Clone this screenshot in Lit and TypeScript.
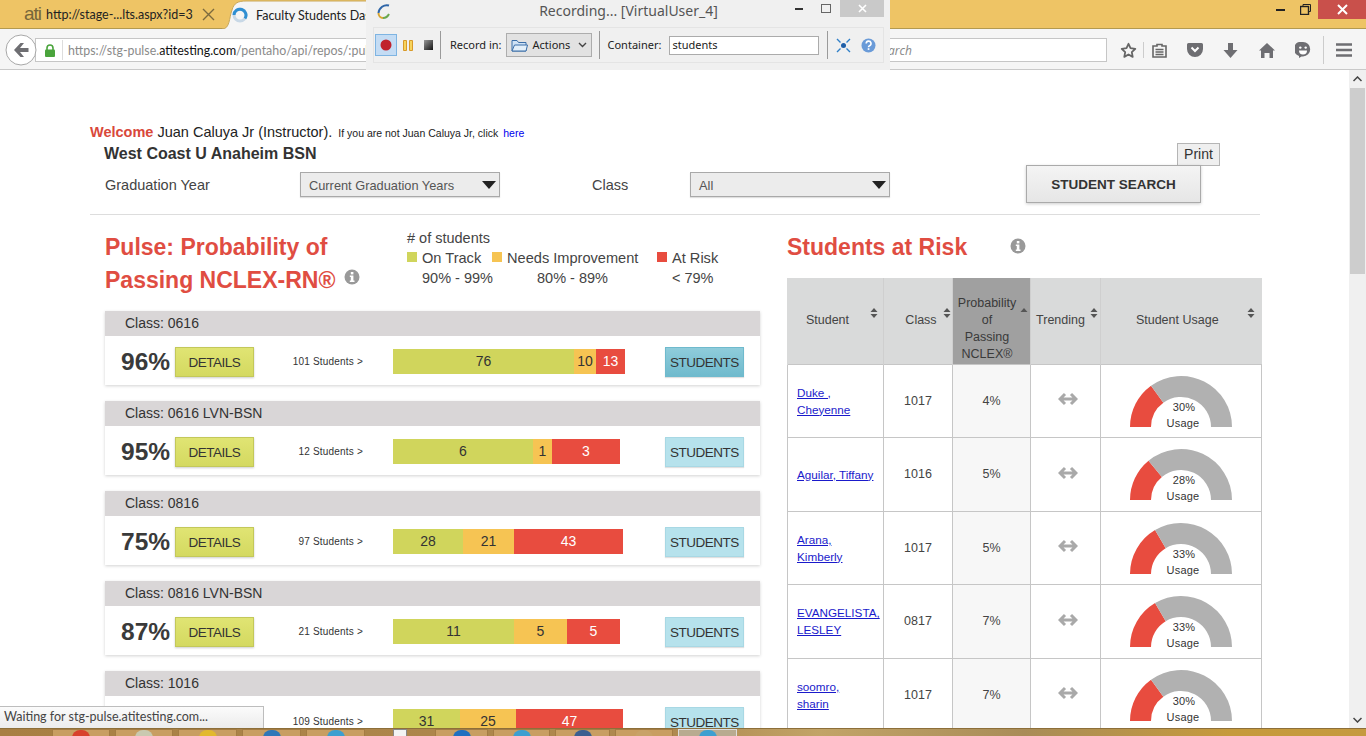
import { css, html, svg, LitElement } from 'lit';
import { customElement } from 'lit/decorators.js';

interface Segment {
  value: number;
  width: number;
  color: string;
}

interface ClassRow {
  name: string;
  pct: number;
  students: number;
  segments: [number, number, number];
  widths: [number, number, number];
}

interface RiskRow {
  student: string[];
  cls: string;
  prob: string;
  usage: number;
}

const CLASSES: ClassRow[] = [
  { name: '0616', pct: 96, students: 101, segments: [76, 10, 13], widths: [181, 22, 29] },
  { name: '0616 LVN-BSN', pct: 95, students: 12, segments: [6, 1, 3], widths: [140, 19, 68] },
  { name: '0816', pct: 75, students: 97, segments: [28, 21, 43], widths: [70, 51, 109] },
  { name: '0816 LVN-BSN', pct: 87, students: 21, segments: [11, 5, 5], widths: [121, 53, 53] },
  { name: '1016', pct: 84, students: 109, segments: [31, 25, 47], widths: [67, 56, 107] },
];

const RISK: RiskRow[] = [
  { student: ['Duke ,', 'Cheyenne'], cls: '1017', prob: '4%', usage: 30 },
  { student: ['Aguilar, Tiffany'], cls: '1016', prob: '5%', usage: 28 },
  { student: ['Arana,', 'Kimberly'], cls: '1017', prob: '5%', usage: 33 },
  { student: ['EVANGELISTA,', 'LESLEY'], cls: '0817', prob: '7%', usage: 33 },
  { student: ['soomro,', 'sharin'], cls: '1017', prob: '7%', usage: 30 },
];

const TASKS = [
  { w: 58, icon: '#d8402c' },
  { w: 58, icon: '#c9c9b0' },
  { w: 59, icon: '#e2b92e' },
  { w: 59, icon: '#2f77b8' },
  { w: 59, icon: '#3d9fd0' },
];
const TASKS_RIGHT = [
  { w: 53, icon: '#1f6fc0' },
  { w: 57, icon: '#3d9fd0' },
  { w: 55, icon: '#3b5f90' },
  { w: 58, icon: '#c8a268' },
  { w: 59, icon: '#3d9fd0', active: true },
];

const SEG_COLORS = ['#d0d55c', '#f6c453', '#e84c3f'];

function arc(startDeg: number, endDeg: number) {
  const cx = 51;
  const cy = 52;
  const R = 51;
  const r = 30;
  const pt = (rad: number, deg: number) => {
    const a = (deg * Math.PI) / 180;
    return `${(cx - rad * Math.cos(a)).toFixed(2)} ${(cy - rad * Math.sin(a)).toFixed(2)}`;
  };
  return `M${pt(R, startDeg)} A${R} ${R} 0 0 1 ${pt(R, endDeg)} L${pt(r, endDeg)} A${r} ${r} 0 0 0 ${pt(r, startDeg)} Z`;
}

const infoIcon = (cls: string) => html`<svg class=${cls} width="16" height="16" viewBox="0 0 16 16">
  <circle cx="8" cy="8" r="7.5" fill="#999"></circle>
  <rect x="6.8" y="3" width="2.6" height="2.4" fill="#fff"></rect>
  <path d="M5.8 6.6h3.6v5h1.1v1.4H5.8v-1.4h1v-3.6h-1z" fill="#fff"></path>
</svg>`;

const sortIcon = (up = true, down = true) => html`<svg class="sort" width="8" height="12" viewBox="0 0 8 12">
  ${up ? svg`<path d="M4 1 L7.5 5 H.5Z" fill="#555"></path>` : ''}
  ${down ? svg`<path d="M4 11 L7.5 7 H.5Z" fill="#555"></path>` : ''}
</svg>`;

@customElement('app-root')
export class AppRoot extends LitElement {
  static override styles = css`
    :host {
      display: flex;
      flex-direction: column;
      position: relative;
      width: 1366px;
      height: 736px;
      overflow: hidden;
      background: #fff;
      font-family: 'Liberation Sans', Arial, sans-serif;
      color: #333;
    }
    .tabs {
      flex: none;
      height: 29px;
      background: #eec465;
      border-bottom: 1px solid #b39a50;
      box-sizing: border-box;
      display: flex;
      position: relative;
      font: 12.5px Lato, sans-serif;
      color: #222;
      white-space: nowrap;
    }
    .tab-one {
      display: flex;
      align-items: center;
      padding-left: 24px;
      width: 226px;
      height: 29px;
      box-sizing: border-box;
      flex: none;
    }
    .ati {
      font: 19px 'Liberation Sans', sans-serif;
      color: #77663a;
      letter-spacing: -1px;
      width: 22px;
      line-height: 20px;
      margin-top: -1px;
      flex: none;
    }
    .tab-url {
      width: 144px;
      flex: none;
    }
    .tab-x {
      margin-left: 12px;
      flex: none;
    }
    .tab-two {
      position: relative;
      width: 200px;
      height: 30px;
      display: flex;
      align-items: center;
      padding-left: 6px;
      box-sizing: border-box;
      flex: none;
    }
    .tab-two .shape {
      position: absolute;
      left: -4px;
      top: 0;
    }
    .tab-two .spin,
    .tab-two span {
      position: relative;
    }
    .tab-two span {
      margin-left: 8px;
    }
    .winctl {
      position: absolute;
      right: 0;
      top: 0;
      display: flex;
    }
    .win-close {
      width: 48px;
      height: 19px;
      background: #c9504b;
      display: flex;
      align-items: center;
      justify-content: center;
    }
    .win-btn {
      width: 25px;
      height: 19px;
      display: flex;
      align-items: center;
      justify-content: center;
    }
    .nav {
      flex: none;
      height: 41px;
      background: #f5f5f5;
      border-bottom: 1px solid #c9c9c9;
      box-sizing: border-box;
      display: flex;
      align-items: center;
      position: relative;
      padding: 2px 0 0 35px;
    }
    .back {
      position: absolute;
      left: 5px;
      top: 5px;
    }
    .addr {
      width: 825px;
      height: 24px;
      box-sizing: border-box;
      background: #fff;
      border: 1px solid #c6c6c6;
      display: flex;
      align-items: center;
      font: 12.4px Lato, sans-serif;
      color: #8a8a8a;
      white-space: nowrap;
      overflow: hidden;
      padding-left: 8px;
    }
    .addr .lock {
      flex: none;
      margin-right: 6px;
    }
    .addr .div {
      width: 1px;
      height: 20px;
      background: #ddd;
      margin-right: 5px;
      flex: none;
    }
    .addr b {
      font-weight: 400;
      color: #111;
    }
    .search {
      width: 247px;
      height: 24px;
      box-sizing: border-box;
      background: #fff;
      border: 1px solid #c6c6c6;
      font: italic 12px 'Open Sans', sans-serif;
      color: #888;
      display: flex;
      align-items: center;
      padding-left: 15px;
    }
    .tools {
      display: flex;
      align-items: center;
      margin-left: 13px;
      height: 100%;
    }
    .tools svg {
      flex: none;
    }
    .tools .vr {
      width: 1px;
      height: 16px;
      background: #ccc;
    }
    .main {
      flex: 1;
      min-height: 0;
      display: flex;
      overflow: hidden;
    }
    .page {
      flex: 1;
      min-width: 0;
      overflow: hidden;
      padding: 54px 0 0 90px;
      box-sizing: border-box;
    }
    .welcome {
      font-size: 14.5px;
      line-height: 16px;
      color: #222;
      white-space: nowrap;
    }
    .welcome strong {
      color: #d9483b;
      font-weight: 700;
    }
    .welcome small {
      font-size: 10.5px;
      color: #222;
      margin-left: 2px;
    }
    .welcome a {
      color: #0000ee;
      font-size: 10.5px;
      text-decoration: none;
      margin-left: 1px;
    }
    .school-row {
      display: flex;
      justify-content: space-between;
      height: 25px;
      padding: 2px 129px 0 14px;
      box-sizing: border-box;
    }
    .school {
      font-size: 16px;
      font-weight: 700;
      line-height: 22px;
      color: #333;
    }
    .print {
      width: 43px;
      height: 23px;
      box-sizing: border-box;
      background: #efefef;
      border: 1px solid #b5b5b5;
      font-size: 14px;
      line-height: 21px;
      text-align: center;
      color: #333;
    }
    .filters {
      height: 50px;
      width: 1170px;
      box-sizing: border-box;
      border-bottom: 1px solid #ddd;
      display: flex;
      padding-left: 15px;
      font-size: 14.5px;
      color: #444;
      margin-top: -1px;
    }
    .filters label {
      margin-top: 8px;
      line-height: 25px;
    }
    .f1 {
      width: 195px;
    }
    .f2 {
      width: 98px;
      margin-left: 92px;
    }
    .select {
      width: 200px;
      height: 25px;
      margin-top: 7px;
      box-sizing: border-box;
      background: #ececec;
      border: 1px solid #a9a9a9;
      box-shadow: 0 1px 1px rgba(0, 0, 0, 0.12);
      display: flex;
      align-items: center;
      justify-content: space-between;
      padding: 1px 3px 0 8px;
      font-size: 12.8px;
      color: #555;
    }
    .search-btn {
      margin-left: 136px;
      width: 175px;
      height: 38px;
      box-sizing: border-box;
      background: linear-gradient(#f4f4f4, #e6e6e6);
      border: 1px solid #aaa;
      box-shadow: 0 1px 3px rgba(0, 0, 0, 0.2);
      font-size: 13.5px;
      font-weight: 700;
      line-height: 37px;
      text-align: center;
      color: #333;
    }
    .cols {
      display: flex;
      padding-left: 15px;
    }
    .left {
      width: 655px;
      flex: none;
    }
    .right {
      width: 475px;
      margin-left: 27px;
      flex: none;
    }
    .head {
      display: flex;
      height: 96px;
    }
    h1 {
      margin: 0;
      font-size: 23px;
      line-height: 33px;
      font-weight: 700;
      color: #e04d42;
    }
    .pulse {
      width: 302px;
      flex: none;
      padding-top: 16px;
      box-sizing: border-box;
    }
    .pulse .info {
      margin-left: 9px;
      vertical-align: 3px;
    }
    .legend {
      display: grid;
      grid-template-columns: 85px 165px auto;
      grid-auto-rows: 20px;
      padding-top: 13px;
      font-size: 14.6px;
      line-height: 20px;
      color: #444;
    }
    .legend .all {
      grid-column: 1 / -1;
      font-size: 14.5px;
    }
    .legend .key {
      display: flex;
      align-items: center;
      white-space: nowrap;
    }
    .legend i {
      display: block;
      width: 10px;
      height: 10px;
      margin: 0 5px 2px 0;
    }
    .legend .rng {
      padding-left: 15px;
      white-space: nowrap;
      font-size: 14.5px;
    }
    .legend .rng.mid {
      padding-left: 45px;
    }
    .card {
      margin-bottom: 16px;
      box-shadow: 0 1px 3px rgba(0, 0, 0, 0.18);
    }
    .card-title {
      height: 25px;
      background: #d9d6d7;
      padding-left: 20px;
      font-size: 14px;
      line-height: 25px;
      color: #333;
    }
    .card-body {
      height: 49px;
      box-sizing: border-box;
      padding: 11px 0 0 16px;
      display: flex;
      background: #fff;
    }
    .pct {
      width: 54px;
      font-size: 24.5px;
      font-weight: 700;
      line-height: 30px;
      color: #3a3a3a;
      white-space: nowrap;
    }
    .btn {
      width: 79px;
      height: 30px;
      box-sizing: border-box;
      font-size: 13.5px;
      letter-spacing: -0.5px;
      line-height: 29px;
      text-align: center;
      color: #333;
      flex: none;
    }
    .details {
      background: linear-gradient(#e0e473, #d4d960);
      border: 1px solid #c3c85a;
      box-shadow: 0 1px 2px rgba(0, 0, 0, 0.2);
    }
    .students {
      background: #b6e2ec;
      border: 1px solid #a8d8e4;
      box-shadow: 0 1px 1px rgba(0, 0, 0, 0.12);
    }
    .students.on {
      background: linear-gradient(#8fccdb, #6fbacd);
      border-color: #6fbacd;
    }
    .count {
      width: 109px;
      flex: none;
      text-align: right;
      font-size: 10px;
      line-height: 30px;
      color: #333;
      letter-spacing: 0.2px;
      white-space: nowrap;
    }
    .bar {
      width: 272px;
      margin-left: 30px;
      flex: none;
      display: flex;
      height: 25px;
      margin-top: 2px;
    }
    .seg {
      text-align: center;
      font-size: 14px;
      line-height: 24px;
      color: #333;
    }
    .seg.risk {
      color: #fff;
    }
    .right h1 {
      padding-top: 16px;
      display: flex;
      align-items: flex-start;
    }
    .right h1 .info {
      margin: 7px 0 0 43px;
    }
    .right .head {
      height: 63px;
    }
    table {
      border-collapse: collapse;
      table-layout: fixed;
      width: 474px;
      font-size: 12.5px;
      color: #444;
    }
    th {
      position: relative;
      box-sizing: border-box;
      height: 86px;
      padding: 0;
      background: #d9dada;
      border-right: 1px solid #cfcfcf;
      font-weight: 400;
      font-size: 12.5px;
      line-height: 17px;
      text-align: center;
      color: #444;
    }
    th:first-child {
      border-left: 1px solid #d9dada;
    }
    th:last-child {
      border-right: 0;
    }
    th.sorted {
      background: #a0a0a0;
      color: #3a3a3a;
      padding: 16px 9px 0 0;
    }
    .sort {
      position: absolute;
      right: 5px;
      top: 29px;
    }
    th:nth-child(2) .sort {
      right: 1px;
    }
    th:nth-child(3) .sort,
    th:nth-child(4) .sort {
      right: 2px;
    }
    th:nth-child(5) .sort {
      right: 7px;
    }
    td {
      padding: 0;
      border: 1px solid #c6c6c6;
      text-align: center;
      vertical-align: middle;
    }
    tr:nth-child(odd) td {
      height: 72px;
    }
    tr:nth-child(even) td {
      height: 73px;
    }
    td.who {
      text-align: left;
      padding-left: 9px;
      line-height: 17px;
      font-size: 11.7px;
    }
    td.who a {
      color: #1a1acb;
      text-decoration: underline;
      display: block;
      white-space: nowrap;
    }
    td.prob {
      background: #f7f7f7;
    }
    td svg {
      display: inline-block;
      vertical-align: middle;
    }
    .trend {
      margin: 0 0 3px 4px;
    }
    .gauge {
      overflow: visible;
      font-size: 11px;
    }
    .gauge text {
      font-family: 'Liberation Sans', sans-serif;
      fill: #333;
      letter-spacing: 0.2px;
    }
    .scroll {
      flex: none;
      width: 17px;
      background: #f0f0f0;
      display: flex;
      flex-direction: column;
      align-items: center;
      padding-top: 6px;
      box-sizing: border-box;
    }
    .thumb {
      width: 15px;
      height: 186px;
      background: #cdcdcd;
      margin-top: 6px;
    }
    .scroll .down {
      margin-top: auto;
      margin-bottom: 5px;
    }
    .taskbar {
      flex: none;
      height: 8px;
      background: linear-gradient(90deg, #a87f43 0, #b08a50 50%, #c2a468 60%, #a98c58 75%, #c69a3c 90%, #c59a40 100%);
      border-top: 1px solid #8d6f3a;
      box-sizing: border-box;
      display: flex;
      gap: 5px;
      padding-left: 52px;
      overflow: hidden;
    }
    .task {
      flex: none;
      height: 8px;
      box-sizing: border-box;
      background: #c89e62;
      border: 1px solid #a47c43;
      display: flex;
      justify-content: center;
    }
    .task.active {
      background: #b8ab90;
      border-color: #ddd;
    }
    .task i {
      display: block;
      width: 18px;
      height: 12px;
      border-radius: 8px 8px 0 0;
    }
    .doc {
      width: 60px;
      flex: none;
      display: flex;
      justify-content: center;
    }
    .doc i {
      display: block;
      width: 14px;
      height: 8px;
      background: #f3f3f3;
      border: 1px solid #888;
      box-sizing: border-box;
    }
    .status {
      position: absolute;
      left: 0;
      top: 706px;
      width: 264px;
      height: 22px;
      box-sizing: border-box;
      background: linear-gradient(#fbfbfb, #ececec);
      border-top: 1px solid #bdbdbd;
      border-right: 1px solid #bdbdbd;
      padding-left: 4px;
      font: 12.5px/20px Lato, sans-serif;
      color: #444;
      white-space: nowrap;
    }
    .rec {
      position: absolute;
      left: 366px;
      top: 0;
      width: 524px;
      height: 70px;
      box-sizing: border-box;
      background: #f0f0f0;
      font: 11px 'Noto Sans', sans-serif;
      color: #222;
      padding: 0 6px 0 7px;
    }
    .rec-title {
      position: relative;
      height: 27px;
      text-align: center;
      font-size: 14px;
      line-height: 22px;
      color: #555;
    }
    .rec-logo {
      position: absolute;
      left: 3px;
      top: 3px;
    }
    .rec-ctl {
      position: absolute;
      right: 0;
      top: 0;
      display: flex;
    }
    .rec-ctl span {
      height: 17px;
      display: flex;
      align-items: center;
      justify-content: center;
    }
    .rec-ctl .mn {
      width: 26px;
    }
    .rec-ctl .mx {
      width: 28px;
    }
    .rec-ctl .x {
      width: 44px;
      background: #c9c9c9;
    }
    .rec-bar {
      height: 36px;
      border: 1px solid #e4e4e4;
      display: flex;
      align-items: center;
      padding-left: 1px;
      box-sizing: border-box;
    }
    .rec-on {
      width: 22px;
      height: 22px;
      box-sizing: border-box;
      border: 1px solid #7eb4e2;
      background: #c4dcf4;
      display: flex;
      align-items: center;
      justify-content: center;
      flex: none;
    }
    .rec-pause {
      margin-left: 6px;
      flex: none;
    }
    .rec-stop {
      margin-left: 11px;
      width: 9px;
      height: 10px;
      background: linear-gradient(135deg, #999, #111);
      flex: none;
    }
    .rec-sep {
      width: 1px;
      height: 28px;
      background: #9a9a9a;
      flex: none;
    }
    .rec-label {
      white-space: nowrap;
      margin-top: -2px;
    }
    .rec-combo {
      width: 86px;
      height: 24px;
      box-sizing: border-box;
      border: 1px solid #adadad;
      background: #e2e2e2;
      margin-left: 4px;
      display: flex;
      align-items: center;
      padding: 0 4px;
      gap: 5px;
      flex: none;
    }
    .rec-combo .chev {
      margin-left: auto;
    }
    .rec-input {
      width: 150px;
      height: 19px;
      box-sizing: border-box;
      border: 1px solid #ababab;
      background: #fff;
      line-height: 15px;
      padding-left: 2px;
      margin-left: 8px;
      flex: none;
    }
  `;

  private renderTabs() {
    return html`<div class="tabs">
      <div class="tab-one">
        <span class="ati">ati</span>
        <span class="tab-url">http://stage-...lts.aspx?id=3</span>
        <svg class="tab-x" width="13" height="13" viewBox="0 0 13 13">
          <path d="M1 1 L12 12 M12 1 L1 12" stroke="#7b6a3e" stroke-width="1.4"></path>
        </svg>
      </div>
      <div class="tab-two">
        <svg class="shape" width="150" height="30" viewBox="0 0 150 30">
          <path d="M0 29 C8 29 7 18 10 10 C12 3 16 1 24 1 H150 V30 H0Z" fill="#f5f5f5" stroke="#c9a85a"></path>
        </svg>
        <svg class="spin" width="16" height="16" viewBox="0 0 16 16">
          <circle cx="8" cy="8" r="6" fill="none" stroke="#c8d8e6" stroke-width="3"></circle>
          <path d="M2 8 A6 6 0 1 1 13 11.5" fill="none" stroke="#2f8fd2" stroke-width="3"></path>
        </svg>
        <span>Faculty Students Das</span>
      </div>
      <div class="winctl">
        <span class="win-btn"><svg width="10" height="4"><rect y="1" width="9" height="2" fill="#222"></rect></svg></span>
        <span class="win-btn"><svg width="11" height="11" viewBox="0 0 11 11">
          <path d="M3 2.5V.5h7.5v7H8.5" fill="none" stroke="#222"></path>
          <rect x=".5" y="2.5" width="8" height="8" fill="none" stroke="#222" stroke-width="1.4"></rect>
        </svg></span>
        <span class="win-close"><svg width="11" height="11" viewBox="0 0 11 11">
          <path d="M1 1 L10 10 M10 1 L1 10" stroke="#fff" stroke-width="2"></path>
        </svg></span>
      </div>
    </div>`;
  }

  private renderNav() {
    return html`<div class="nav">
      <div class="addr">
        <svg class="lock" width="12" height="13" viewBox="0 0 12 13">
          <path d="M3 6V4a3 3 0 0 1 6 0v2" fill="none" stroke="#4aa43c" stroke-width="1.6"></path>
          <rect x="1" y="5.5" width="10" height="7.5" rx="1" fill="#4aa43c"></rect>
        </svg>
        <span class="div"></span>
        <span>https://stg-pulse.<b>atitesting.com</b>/pentaho/api/repos/:pub</span>
      </div>
      <div class="search">Search</div>
      <div class="tools">
        <svg width="17" height="17" viewBox="0 0 17 17">
          <path d="M8.5 1.8l2 4.4 4.8.6-3.5 3.3.9 4.8-4.2-2.4-4.2 2.4.9-4.8L1.7 6.8l4.8-.6z" fill="none" stroke="#666" stroke-width="1.8" stroke-linejoin="round"></path>
        </svg>
        <span class="vr" style="margin:0 8px 0 6px"></span>
        <svg width="15" height="15" viewBox="0 0 15 15" style="margin-right:20px">
          <path d="M1 3h4V1.5h5V3h4v11H1z" fill="none" stroke="#666" stroke-width="1.6"></path>
          <path d="M3.5 6.5h8M3.5 9h8M3.5 11.5h8" stroke="#666" stroke-width="1.4"></path>
        </svg>
        <svg width="16" height="14" viewBox="0 0 16 14" style="margin-right:20px">
          <path d="M0 1.5A1.5 1.5 0 0 1 1.5 0h13A1.5 1.5 0 0 1 16 1.5V6a8 8 0 0 1-16 0z" fill="#6e6e72"></path>
          <path d="M4.5 4.5 8 8l3.5-3.5" fill="none" stroke="#fff" stroke-width="2"></path>
        </svg>
        <svg width="15" height="15" viewBox="0 0 15 15" style="margin-right:21px">
          <path d="M5 0h5v7h4.500l-7 8-7-8H5z" fill="#6e6e72"></path>
        </svg>
        <svg width="16" height="15" viewBox="0 0 16 15" style="margin-right:20px">
          <path d="M8 0l8 7.500h-2V15h-3.500v-5h-5v5H2V7.500H0z" fill="#6e6e72"></path>
        </svg>
        <svg width="16" height="16" viewBox="0 0 16 16" style="margin-right:12px">
          <path d="M8 0a7.200 7.200 0 0 1 0 14.400H6.500L4 16v-2.100A7.200 7.200 0 0 1 8 0z" fill="#6e6e72"></path>
          <circle cx="5.300" cy="5.600" r="1.200" fill="#fff"></circle>
          <circle cx="10.700" cy="5.600" r="1.200" fill="#fff"></circle>
          <path d="M4 8.600h8a4 4 0 0 1-8 0z" fill="#fff"></path>
        </svg>
        <span class="vr" style="height:28px;margin-right:12px"></span>
        <svg width="16" height="14" viewBox="0 0 16 14">
          <path d="M0 1.500h16M0 7h16M0 12.500h16" stroke="#6e6e72" stroke-width="2.600"></path>
        </svg>
      </div>
      <svg class="back" width="32" height="32" viewBox="0 0 32 32">
        <circle cx="16" cy="16" r="15" fill="#fff" stroke="#a8a8a8"></circle>
        <path d="M9 16l6.500-7h3.500l-4 5h8.500v4H15l4 5h-3.500z" fill="#6e6e72"></path>
      </svg>
    </div>`;
  }

  private renderHeader() {
    return html`
      <div class="welcome">
        <strong>Welcome</strong> Juan Caluya Jr (Instructor).
        <small>If you are not Juan Caluya Jr, click</small>
        <a>here</a>
      </div>
      <div class="school-row">
        <div class="school">West Coast U Anaheim BSN</div>
        <div class="print">Print</div>
      </div>
      <div class="filters">
        <label class="f1">Graduation Year</label>
        <div class="select">
          <span>Current Graduation Years</span>
          <svg width="14" height="8"><path d="M0 0h14L7 8z" fill="#222"></path></svg>
        </div>
        <label class="f2">Class</label>
        <div class="select">
          <span>All</span>
          <svg width="14" height="8"><path d="M0 0h14L7 8z" fill="#222"></path></svg>
        </div>
        <div class="search-btn">STUDENT SEARCH</div>
      </div>
    `;
  }

  private renderCard(c: ClassRow, i: number) {
    const segs: Segment[] = c.segments.map((value, n) => ({
      value,
      width: c.widths[n],
      color: SEG_COLORS[n],
    }));
    return html`<div class="card">
      <div class="card-title">Class: ${c.name}</div>
      <div class="card-body">
        <div class="pct">${c.pct}%</div>
        <div class="btn details">DETAILS</div>
        <div class="count">${c.students} Students &gt;</div>
        <div class="bar">
          ${segs.map(
            (s, n) =>
              html`<div class="seg ${n === 2 ? 'risk' : ''}" style="width:${s.width}px;background:${s.color}">${s.value}</div>`,
          )}
        </div>
        <div class="btn students ${i === 0 ? 'on' : ''}">STUDENTS</div>
      </div>
    </div>`;
  }

  private renderGauge(pct: number) {
    const split = (pct / 100) * 180;
    return html`<svg class="gauge" width="102" height="52" viewBox="0 0 102 52">
      <path d=${arc(0, split)} fill="#e84c3f"></path>
      <path d=${arc(split, 180)} fill="#b1b1b1"></path>
      <text x="54" y="36" text-anchor="middle">${pct}%</text>
      <text x="53" y="52" text-anchor="middle">Usage</text>
    </svg>`;
  }

  private renderTable() {
    return html`<table>
      <colgroup>
        <col style="width:96px" />
        <col style="width:69px" />
        <col style="width:78px" />
        <col style="width:70px" />
        <col style="width:161px" />
      </colgroup>
      <thead>
        <tr>
          <th style="padding-right:16px">Student${sortIcon()}</th>
          <th style="padding-left:6px">Class${sortIcon()}</th>
          <th class="sorted">Probability<br />of<br />Passing<br />NCLEX®${sortIcon(true, false)}</th>
          <th style="padding-right:10px">Trending${sortIcon()}</th>
          <th style="padding-right:8px">Student Usage${sortIcon()}</th>
        </tr>
      </thead>
      <tbody>
        ${RISK.map(
          (r) => html`<tr>
            <td class="who">${r.student.map((s) => html`<a>${s}</a>`)}</td>
            <td>${r.cls}</td>
            <td class="prob">${r.prob}</td>
            <td>
              <svg class="trend" width="20" height="14" viewBox="0 0 20 14">
                <path d="M7 2 2 7l5 5M13 2l5 5-5 5M3 7h14" fill="none" stroke="#a9a9a9" stroke-width="3"></path>
              </svg>
            </td>
            <td>${this.renderGauge(r.usage)}</td>
          </tr>`,
        )}
      </tbody>
    </table>`;
  }

  private renderRecorder() {
    return html`<div class="rec">
      <div class="rec-title">
        <svg class="rec-logo" width="16" height="17" viewBox="0 0 16 17">
          <path d="M13 2.500C8 1 3 5 2.500 10" fill="none" stroke="#2f66a8" stroke-width="2"></path>
          <path d="M2.500 10c0 3 2 5 4.500 5" fill="none" stroke="#d8a530" stroke-width="2"></path>
          <path d="M7 15c3 0 5-2 6-4" fill="none" stroke="#6aa84f" stroke-width="2"></path>
        </svg>
        Recording... [VirtualUser_4]
        <div class="rec-ctl">
          <span class="mn"><svg width="8" height="2"><rect width="8" height="2" fill="#333"></rect></svg></span>
          <span class="mx"><svg width="10" height="9"><rect x=".5" y=".5" width="9" height="8" fill="none" stroke="#666"></rect></svg></span>
          <span class="x"><svg width="9" height="9" viewBox="0 0 9 9"><path d="M1 1l7 7M8 1L1 8" stroke="#fff" stroke-width="1.600"></path></svg></span>
        </div>
      </div>
      <div class="rec-bar">
        <div class="rec-on">
          <svg width="12" height="12"><circle cx="6" cy="6" r="5.500" fill="#c0212c"></circle></svg>
        </div>
        <svg class="rec-pause" width="10" height="11" viewBox="0 0 10 11">
          <path d="M.5.500h3v10h-3zM6.500.500h3v10h-3z" fill="#f6d35c" stroke="#d89a2a"></path>
        </svg>
        <div class="rec-stop"></div>
        <div class="rec-sep" style="margin-left:7px"></div>
        <span class="rec-label" style="margin-left:9px">Record in:</span>
        <div class="rec-combo">
          <svg width="17" height="13" viewBox="0 0 17 13">
            <path d="M1 12V1.500h5l1.500 2H15V12z" fill="#cfe2f5" stroke="#3b6ea8"></path>
            <path d="M1 12l2.500-6H16.500L15 12z" fill="#e3eff9" stroke="#3b6ea8"></path>
          </svg>
          <span class="rec-label">Actions</span>
          <svg class="chev" width="9" height="6" viewBox="0 0 9 6">
            <path d="M1 1l3.500 3.500L8 1" fill="none" stroke="#444" stroke-width="1.400"></path>
          </svg>
        </div>
        <div class="rec-sep" style="margin-left:7px"></div>
        <span class="rec-label" style="margin-left:8px">Container:</span>
        <div class="rec-input">students</div>
        <div class="rec-sep" style="margin-left:8px"></div>
        <svg style="margin-left:8px;flex:none" width="15" height="15" viewBox="0 0 15 15">
          <circle cx="7.500" cy="7.500" r="2.500" fill="#1f5fa8"></circle>
          <path d="M1 1l3.500 3.500M14 1l-3.500 3.500M1 14l3.500-3.500M14 14l-3.500-3.500" stroke="#2f7fc8" stroke-width="1.400"></path>
        </svg>
        <svg style="margin-left:10px;flex:none" width="15" height="15" viewBox="0 0 15 15">
          <circle cx="7.500" cy="7.500" r="7" fill="#6a9bd8"></circle>
          <path d="M5.200 5.500a2.400 2.400 0 1 1 3.400 2.200c-.8.400-1.100.8-1.100 1.500" fill="none" stroke="#fff" stroke-width="1.600"></path>
          <rect x="6.700" y="10.200" width="1.700" height="1.700" fill="#fff"></rect>
        </svg>
      </div>
    </div>`;
  }

  override render() {
    return html`
      ${this.renderTabs()} ${this.renderNav()}
      <div class="main">
        <div class="page">
          ${this.renderHeader()}
          <div class="cols">
            <div class="left">
              <div class="head">
                <div class="pulse">
                  <h1>Pulse: Probability of<br />Passing NCLEX-RN®${infoIcon('info')}</h1>
                </div>
                <div class="legend">
                  <div class="all"># of students</div>
                  <div class="key"><i style="background:#d0d55c"></i>On Track</div>
                  <div class="key"><i style="background:#f6c453"></i>Needs Improvement</div>
                  <div class="key"><i style="background:#e84c3f"></i>At Risk</div>
                  <div class="rng">90% - 99%</div>
                  <div class="rng mid">80% - 89%</div>
                  <div class="rng">&lt; 79%</div>
                </div>
              </div>
              ${CLASSES.map((c, i) => this.renderCard(c, i))}
            </div>
            <div class="right">
              <div class="head"><h1>Students at Risk${infoIcon('info')}</h1></div>
              ${this.renderTable()}
            </div>
          </div>
        </div>
        <div class="scroll">
          <svg width="9" height="6" viewBox="0 0 9 6"><path d="M.5 5 4.500 1l4 4" fill="none" stroke="#444" stroke-width="1.500"></path></svg>
          <div class="thumb"></div>
          <svg class="down" width="9" height="6" viewBox="0 0 9 6"><path d="M.5 1l4 4 4-4" fill="none" stroke="#444" stroke-width="1.500"></path></svg>
        </div>
      </div>
      <div class="taskbar">
        ${TASKS.map(
          (t) => html`<div class="task" style="width:${t.w}px"><i style="background:${t.icon}"></i></div>`,
        )}
        <div class="doc"><i></i></div>
        ${TASKS_RIGHT.map(
          (t) =>
            html`<div class="task ${t.active ? 'active' : ''}" style="width:${t.w}px"><i style="background:${t.icon}"></i></div>`,
        )}
      </div>
      <div class="status">Waiting for stg-pulse.atitesting.com...</div>
      ${this.renderRecorder()}
    `;
  }
}

declare global {
  interface HTMLElementTagNameMap {
    'app-root': AppRoot;
  }
}
